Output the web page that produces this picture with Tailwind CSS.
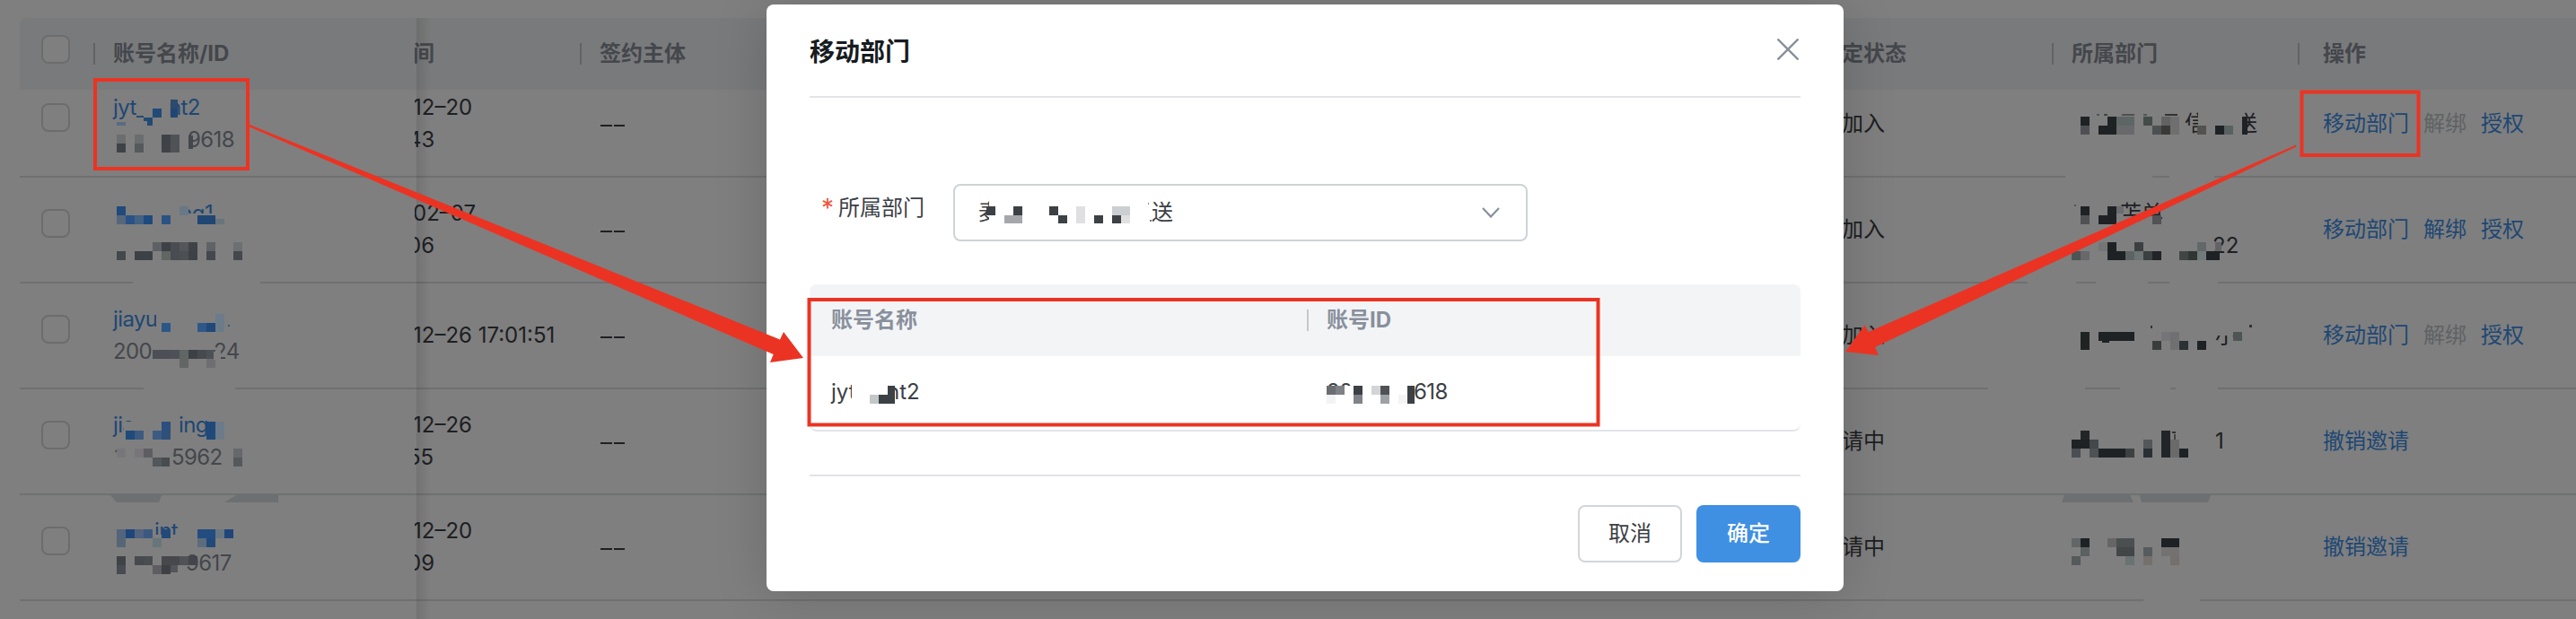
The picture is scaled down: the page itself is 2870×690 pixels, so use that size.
<!DOCTYPE html>
<html lang="zh-CN">
<head>
  <meta charset="UTF-8">
  <title>移动部门</title>
  <script src="https://cdn.jsdelivr.net/npm/@tailwindcss/browser@4"></script>
</head>
<body class="relative w-[2870px] h-[690px] overflow-hidden bg-white font-['Inter','Noto_Sans_CJK_SC',sans-serif] text-2xl leading-9 text-[#3c4045]">

  <!-- account table -->
  <div class="pl-[22px] pt-5 h-[690px] overflow-hidden">
    <div class="flex items-center h-20 bg-[#f3f4f6] rounded-tl-lg font-bold text-[#888e98]">
      <div class="w-[82px] pl-6 -mt-[10px]"><div class="size-8 rounded-lg border-2 border-[#d9d9db] bg-white"></div></div>
      <div class="w-[358px] flex items-center gap-5"><i class="w-0.5 h-6 bg-[#c4c6ca]"></i>账号名称/ID</div>
      <div class="w-[184px] overflow-hidden"><span class="-ml-0.5">间</span></div>
      <div class="w-[1382px] flex items-center gap-5"><i class="w-0.5 h-6 bg-[#c4c6ca]"></i>签约主体</div>
      <div class="w-[258px] pl-6 shrink-0">定状态</div>
      <div class="w-[274px] flex items-center gap-5"><i class="w-0.5 h-6 bg-[#c4c6ca]"></i>所属部门</div>
      <div class="flex items-center gap-[26px]"><i class="w-0.5 h-6 bg-[#c4c6ca]"></i>操作</div>
    </div>
    <div id="rows" class="-mt-5"></div>
  </div>
  <!-- shadow of the fixed column -->
  <div class="absolute left-[464px] top-5 bottom-0 w-4 bg-linear-to-r from-black/10 to-transparent"></div>

  <!-- mask + dialog -->
  <div class="absolute inset-0 bg-black/50 flex items-start pl-[854px] pt-[5px]">
    <div class="w-[1200px] h-[654px] px-12 bg-white rounded-lg shadow-[0_4px_60px_rgba(0,0,0,0.16)]">
      <div class="h-[104px] flex items-center justify-between border-b-2 border-[#e3e3e9]">
        <h2 class="pt-[3px] text-[28px] font-bold text-[#171c1f]">移动部门</h2>
        <svg class="size-6 mr-0.5 -mt-0.5" viewBox="0 0 24 24" fill="none" stroke="#88909c" stroke-width="2.4"><path d="M0.5 0.5L23.5 23.5M23.5 0.5L0.5 23.5"/></svg>
      </div>
      <div class="mt-24 flex h-16">
        <div class="w-40 pl-[13px] pt-[9px] flex gap-[6px]"><span class="w-[13px] text-[28px] text-[#f0553c]">*</span>所属部门</div>
        <div class="w-[640px] h-16 px-[26px] flex items-center justify-between border-2 border-[#cfd3d8] rounded-lg">
          <div class="flex"><span class="w-[193px]">麦</span>送</div>
          <svg class="w-5 h-3 mr-[3px]" viewBox="0 0 20 12" fill="none" stroke="#88909c" stroke-width="2.2"><path d="M1 1L10 10.5L19 1"/></svg>
        </div>
      </div>
      <div class="mt-12 h-[164px] rounded-lg overflow-hidden border-b-2 border-[#e3e4e9]">
        <div class="h-20 flex items-center bg-[#f3f4f6] font-bold text-[#88909c]">
          <div class="w-[554px] pl-6">账号名称</div>
          <div class="flex items-center gap-5"><i class="w-0.5 h-6 bg-[#c4c7cc]"></i>账号ID</div>
        </div>
        <div class="h-20 flex items-center">
          <div class="w-[576px] pl-6 flex"><span class="w-[62px]">jyt</span><span>nt2</span></div>
          <div class="flex"><span class="w-[97px] tracking-tight">20</span><span class="tracking-tight">618</span></div>
        </div>
      </div>
      <div class="mt-12 border-t-2 border-[#e3e3e9] pt-8 flex justify-end gap-4">
        <button class="w-[116px] h-16 rounded-lg border-2 border-[#d2d5da]">取消</button>
        <button class="w-[116px] h-16 rounded-lg bg-[#3f90e3] text-white font-medium">确定</button>
      </div>
    </div>
  </div>

  <!-- pixelated areas, callout boxes and arrows -->
  <svg class="absolute inset-0" width="2870" height="690" viewBox="0 0 2870 690">
    <g id="mosaic" shape-rendering="crispEdges"></g>
    <g fill="#6c7071">
      <path d="M123 552H180L177 560H130Z"/>
      <path d="M263 552H310V560H250Z"/>
      <path d="M2300 552H2373L2377 560H2297Z"/>
      <path d="M2384 552H2463L2460 560H2386Z"/>
    </g>
    <g fill="none" stroke="#eb3323" stroke-width="4">
      <rect x="106" y="89" width="170" height="99"/>
      <rect x="2564.5" y="102.5" width="130" height="70.5"/>
      <rect x="901.5" y="334" width="879" height="139.5"/>
    </g>
    <g fill="#eb3323">
      <path d="M277 138.5L869 378.5L873 370L895 399L858 404L861.7 395L277 141Z"/>
      <path d="M2558 161.5L2081.7 370L2077.5 362.5L2056 392L2093 396L2089 387L2558.5 163.5Z"/>
    </g>
  </svg>

<script>
const rows = [
  { nom: ["jyt", 62, "nt2"], id: ["", 83, "9618"], data: ["12–20", "43"], estat: "加入", dep: [["", 126, "信"], ["", 33, "送"]], accio: 1 },
  { nom: ["", 69, "ing1"], id: ["", 60, ""], data: ["02–07", "06"], estat: "加入", dep: [["", 54, "苫单"], ["", 157, "22"]], accio: 2 },
  { nom: ["jiayu", 60, ""], id: ["200", 112, "24"], data: ["12–26 17:01:51"], estat: "加入", dep: [["", 160, "小"]], accio: 1 },
  { nom: ["jia", 73, "ing"], id: ["2", 65, "5962"], data: ["12–26", "55"], estat: "请中", dep: [["", 160, "1"]], accio: 0 },
  { nom: ["", 46, "int"], id: ["", 81, "9617"], data: ["12–20", "09"], estat: "请中", dep: [], accio: 0 },
];

const partes = (p) => `<div class="flex h-9"><span class="shrink-0" style="width:${p[1]}px">${p[0]}</span><span>${p[2]}</span></div>`;

const accions = (n) => {
  if (n === 0) return "<span>撤销邀请</span>";
  return `<span>移动部门</span><span class="${n === 1 ? "text-[#c0c4c8]" : ""}">解绑</span><span>授权</span>`;
};

document.getElementById("rows").innerHTML = rows.map((r, i) => `
  <div class="flex items-center h-[118px] border-b-2 border-[#dfe0e2]">
    <div class="w-[104px] pl-6 -mt-[14px]"><div class="size-8 rounded-lg border-2 border-[#d9d9db]"></div></div>
    <div class="w-[336px] tracking-[-0.6px]">
      <div class="text-[#3e8fe8]">${partes(r.nom)}</div>
      <div class="text-[#888e98]">${partes(r.id)}</div>
    </div>
    <div class="w-[206px] overflow-hidden whitespace-nowrap">
      <div class="-ml-0.5">${r.data[0]}</div>
      ${r.data[1] ? `<div class="-ml-2">${r.data[1]}</div>` : ""}
    </div>
    <div class="w-[1360px] flex gap-0.5 pt-[3px] pl-[1px]"><i class="w-[12.5px] h-0.5 bg-[#3c4045]"></i><i class="w-[12.5px] h-0.5 bg-[#3c4045]"></i></div>
    <div class="w-[280px] pl-6">${r.estat}</div>
    <div class="w-[280px] ${i === 0 ? "flex" : ""}">${r.dep.map(partes).join("")}</div>
    <div class="flex gap-4 text-[#3e8fe8]">${accions(r.accio)}</div>
  </div>`).join("");

// [x, y, width, height, colour]
const g = "#7f7f7f", f = "#1e2225", w = "#fff", t = "#3c4145";
const cells = [
  [152,129,8,2,"#2a4a6e"],[170,121,10,10,"#214a77"],[190,111,8,10,"#2c4a6c"],[190,121,8,10,"#204673"],[164,131,6,9,"#244a74"],[160,131,4,4,"#244a74"],[130,136,10,4,"#5a6b82"],
  [130,150,10,10,"#6b6d6e"],[130,160,10,10,"#3f4347"],[150,150,10,10,"#696d6d"],[150,160,10,10,"#54595b"],[180,150,10,20,"#3f4347"],[190,150,10,20,"#505256"],[200,145,10,22,g],[210,151,5,15,"#44474c"],

  [196,226,14,14,g],[196,238,60,16,g],[130,230,10,10,"#204a7b"],[130,240,10,10,"#56677c"],[140,240,10,10,"#2a5286"],[150,240,10,10,"#436085"],[160,240,10,10,"#1f4a80"],[180,240,10,10,"#2a5384"],[200,230,10,10,"#697886"],[220,240,20,10,"#204673"],[240,244,10,6,"#68747e"],
  [170,270,10,10,"#5f6065"],[180,270,10,10,"#3d4145"],[190,270,10,10,"#494d51"],[200,270,10,10,"#54575a"],[210,270,10,10,"#3f4347"],[230,270,10,10,"#5f6365"],[260,270,10,10,"#6b7072"],
  [130,280,10,10,"#44474c"],[150,280,20,10,"#3d4145"],[180,280,10,10,"#606664"],[190,280,10,10,"#494c50"],[200,280,10,10,"#4c5052"],[210,280,10,10,"#3e4247"],[230,280,10,10,"#44484e"],[260,280,10,10,"#44474c"],
  [148,314,142,2,g],

  [174,345,12,22,g],[180,360,10,10,"#2b5788"],[220,360,10,10,"#2f5888"],[230,360,10,10,"#20497a"],[240,350,10,20,"#6b7b89"],[254,362,2,2,"#2b5788"],
  [170,390,20,10,"#4c4f56"],[190,390,10,10,"#4e5157"],[200,390,10,10,"#5f6664"],[210,390,10,10,"#3d4145"],[220,390,10,10,"#454a4f"],[230,390,10,10,"#4d5156"],[200,400,10,10,"#646565"],[230,400,10,10,"#6e6e70"],
  [238,392,8,9,g],[160,432,102,2,g],

  [138,470,12,14,g],[180,470,10,10,"#2b4f7e"],[230,470,10,20,"#20497a"],[240,470,10,20,"#6b7b89"],[140,480,10,10,"#204a7b"],[150,480,10,10,"#3a5a80"],[170,480,10,10,"#3d5b82"],[180,480,10,10,"#2f5078"],
  [124,504,18,16,g],[130,500,10,10,"#77777b"],[150,500,10,10,"#78757a"],[160,500,10,10,"#5d5e63"],[170,510,10,10,"#525759"],[180,510,9,10,"#474c4e"],[260,500,10,10,"#66686b"],[260,510,10,10,"#54595c"],

  [170,596,36,14,g],[130,590,10,10,"#52657c"],[140,590,10,10,"#1f467a"],[150,590,10,10,"#51637e"],[160,590,10,10,"#3b5980"],[180,590,10,10,"#214a7b"],[220,590,20,10,"#234d80"],[240,590,10,10,"#687682"],[250,590,10,10,"#1f467a"],
  [130,600,10,10,"#566676"],[170,600,10,10,"#68767b"],[220,600,10,10,"#5b6c7e"],[230,600,10,10,"#214a7b"],
  [130,620,10,10,"#3f4347"],[150,620,10,10,"#464a4d"],[160,620,10,10,"#494d4f"],[180,620,20,10,"#47484c"],[200,620,10,10,"#505257"],[210,620,10,10,"#44444c"],[130,630,10,10,"#484b51"],[170,630,10,10,"#5d5d62"],[180,630,10,10,"#3f4043"],[190,630,8,8,"#54555a"],

  [2449,124,14,26,g],[2318,130,10,10,f],[2348,130,10,10,f],[2358,130,20,10,"#5d6565"],[2388,130,10,10,"#444c4a"],[2408,130,10,10,"#626263"],[2418,130,10,20,"#6f6f6f"],
  [2434,140,8,12,g],[2318,140,10,10,"#505054"],[2338,140,20,10,f],[2358,140,20,10,"#69696c"],[2398,140,10,10,"#4b5050"],[2408,140,10,10,"#3b3a39"],[2448,140,10,10,"#545251"],[2468,140,10,10,f],[2478,140,10,10,"#5a6261"],[2488,125,10,25,g],[2498,130,6,20,f],
  [2336,127,3,2,"#555"],[2344,127,4,2,"#444"],[2364,127,14,2,"#505050"],[2388,127,4,2,"#555"],[2412,127,14,2,"#333"],
  [2301,196,97,2,g],[2417,196,50,2,g],

  [2360,241,40,12,g],[2318,230,10,10,f],[2348,230,10,10,f],[2358,230,8,8,"#6b6c70"],[2318,240,10,10,"#505152"],[2338,240,20,10,f],[2398,240,10,10,"#505254"],[2311,228,2,2,"#555"],
  [2338,270,10,10,"#757575"],[2348,270,10,20,f],[2378,270,10,10,"#3d4040"],[2448,270,10,10,"#626868"],[2468,270,7,10,"#636365"],
  [2308,280,10,10,"#4d5454"],[2318,280,10,10,"#68686a"],[2358,280,10,10,f],[2368,280,10,10,"#5c6363"],[2378,280,10,10,"#6c7474"],[2388,280,10,10,"#3b4040"],[2398,280,10,10,"#222326"],[2428,280,10,10,"#414644"],[2438,280,10,10,"#303634"],[2448,280,10,10,"#727a7b"],[2458,280,15,10,f],
  [2259,314,54,2,g],[2335,314,58,2,g],[2417,314,54,2,g],

  [2464,360,24,14,g],[2318,370,10,20,"#1f2422"],[2338,370,40,10,f],[2408,370,10,10,"#757577"],[2418,370,10,20,"#707070"],[2488,370,10,10,"#4f5555"],[2398,380,10,10,"#393d3c"],[2428,380,10,10,"#2c3134"],[2448,380,10,10,f],[2342,380,8,2,f],[2396,363,2,3,"#333"],[2506,362,3,3,"#333"],
  [2215,432,108,2,g],[2362,432,56,2,g],[2424,432,47,2,g],

  [2318,480,10,10,"#232628"],[2408,480,10,30,"#222527"],[2308,490,20,10,f],[2328,490,10,10,"#44484a"],[2388,490,10,10,"#53575a"],[2308,500,10,10,"#494e53"],[2328,500,10,10,"#4e5254"],[2338,500,30,10,f],[2368,500,10,10,"#3e4141"],[2388,500,10,10,"#2b3035"],[2418,490,10,20,"#6a6a6a"],[2428,500,10,10,f],[2420,481,4,2,"#333"],[2422,484,2,6,"#444"],

  [2308,600,10,10,"#626666"],[2318,600,10,10,f],[2348,600,10,10,"#666"],[2358,600,20,10,"#4b4f4f"],[2408,600,20,10,f],[2318,610,10,10,"#5b6060"],[2358,610,20,10,"#424646"],[2388,610,10,10,"#565b5e"],[2408,610,20,10,"#747271"],[2308,620,10,10,"#555a5a"],[2368,620,10,10,"#6a7272"],[2388,620,10,10,"#74706d"],[2418,620,10,10,"#74706d"],
  [2388,668,63,2,g],

  // dialog
  [1102,224,14,26,w],[1099,230,10,10,t],[1129,230,10,10,t],[1119,240,20,9,"#a5a7ab"],[1169,230,10,10,t],[1179,240,10,9,t],[1199,230,10,19,"#e0e0e3"],[1219,240,10,9,t],[1239,230,20,10,"#cccfd1"],[1239,240,10,9,t],[1249,240,10,9,"#e0e0e0"],[1279,226,1,2,"#888"],[1281,245,2,2,"#777"],
  [949,420,20,30,w],[969,440,10,10,"#c3c7c8"],[979,440,10,10,t],[989,430,8,20,t],
  [1478,430,40,20,w],[1478,430,10,10,"#6a6d72"],[1488,430,10,10,"#7e8287"],[1478,440,10,10,"#f3f3f3"],[1508,430,10,10,t],[1508,440,10,10,"#808387"],[1528,430,10,10,"#d3d4d6"],[1538,430,10,10,"#505256"],[1538,440,10,10,"#9ea1a5"],[1558,440,10,10,"#f4f4f4"],[1568,430,8,20,t],
];
document.getElementById("mosaic").innerHTML = cells
  .map(([x, y, a, b, c]) => `<rect x="${x}" y="${y}" width="${a}" height="${b}" fill="${c}"/>`)
  .join("");
</script>
</body>
</html>
